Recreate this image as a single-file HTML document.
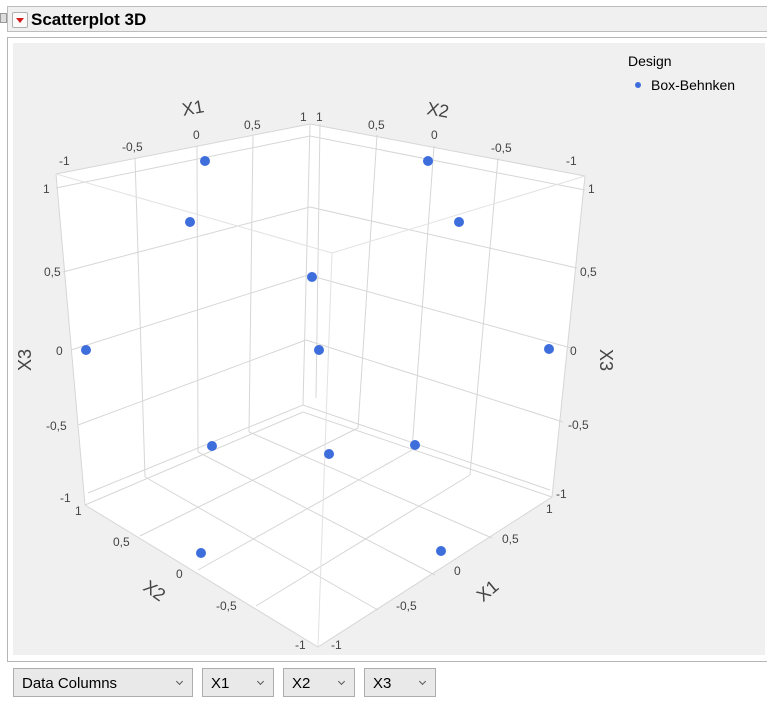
<!DOCTYPE html>
<html><head><meta charset="utf-8"><style>
body{margin:0;width:767px;height:701px;background:#fff;position:relative;overflow:hidden;font-family:"Liberation Sans",sans-serif}
.hdr{position:absolute;left:7px;top:6px;width:770px;height:24px;background:#f0f0f0;border:1px solid #bdbdbd}
.hdr .t{position:absolute;left:23px;top:3px;font-weight:bold;font-size:17px;color:#000}
.btn{position:absolute;left:4px;top:5px;width:14px;height:14px;border:1px solid #b0b0b0;border-radius:2px;background:#fafafa}
.btn:after{content:"";position:absolute;left:3px;top:5px;border-left:4px solid transparent;border-right:4px solid transparent;border-top:5px solid #d21a1a}
.box{position:absolute;left:7px;top:37px;width:770px;height:623px;border:1px solid #b5b5b5;background:#fff}
.plot{position:absolute;left:13px;top:43px;width:752px;height:612px;background:#f0f0f0}
.dd{position:absolute;top:668px;height:29px;border:1px solid #adadad;background:#e9e9e9;font-size:15px;line-height:29px;box-sizing:border-box;padding-left:8px;color:#000}
.dd:after{content:"";position:absolute;right:10px;top:10px;width:4px;height:4px;border-right:1px solid #555;border-bottom:1px solid #555;transform:rotate(45deg)}
svg text{font-family:"Liberation Sans",sans-serif;fill:#444;font-size:12px}
</style></head><body>
<div class="hdr"><div class="btn"></div><div class="t">Scatterplot 3D</div></div>
<div style="position:absolute;left:0;top:13px;width:5px;height:8px;border:1px solid #999;background:#ddd"></div>
<div class="box"></div>
<div class="plot"></div>
<svg width="767" height="701" style="position:absolute;left:0;top:0">
<polygon points="56,174 310,124 585,176 552,497 318,647 85,505" fill="#fff"/>
<g stroke="#d6d6d6" stroke-width="1" fill="none">
<polyline points="56,174 310,124 585,176"/>
<polyline points="56,188 310,136 585,190"/>
<line x1="56" y1="174" x2="85" y2="505"/>
<line x1="585" y1="176" x2="552" y2="497"/>
<line x1="310" y1="124" x2="303" y2="405"/>
<line x1="320" y1="124" x2="316" y2="398"/>
<polyline points="85,505 318,647 552,497"/>
<polyline points="88,493 303,405 550,490"/>
<polyline points="85,505 303,412 552,497"/>
<line x1="135" y1="158" x2="145" y2="477"/>
<line x1="197" y1="146" x2="198" y2="452"/>
<line x1="253" y1="136" x2="249" y2="432"/>
<line x1="377" y1="135" x2="358" y2="428"/>
<line x1="434" y1="146" x2="412" y2="450"/>
<line x1="498" y1="158" x2="470" y2="475"/>
<line x1="63" y1="272" x2="310" y2="207"/>
<line x1="71" y1="350" x2="308" y2="275"/>
<line x1="78" y1="425" x2="306" y2="340"/>
<line x1="577" y1="268" x2="310" y2="207"/>
<line x1="571" y1="348" x2="308" y2="275"/>
<line x1="563" y1="422" x2="306" y2="340"/>
<line x1="140" y1="536" x2="358" y2="428"/>
<line x1="198" y1="570" x2="412" y2="450"/>
<line x1="256" y1="606" x2="470" y2="475"/>
<line x1="378" y1="610" x2="145" y2="477"/>
<line x1="435" y1="575" x2="198" y2="452"/>
<line x1="492" y1="538" x2="249" y2="432"/>
</g>
<g stroke="#e2e2e2" fill="none">
<polyline points="56,174 332,253 585,176"/>
<line x1="332" y1="253" x2="318" y2="647"/>
</g>
<g fill="#3e6ddc">
<circle cx="205" cy="161" r="5"/><circle cx="190" cy="222" r="5"/><circle cx="312" cy="277" r="5"/>
<circle cx="319" cy="350" r="5"/><circle cx="86" cy="350" r="5"/><circle cx="212" cy="446" r="5"/>
<circle cx="329" cy="454" r="5"/><circle cx="415" cy="445" r="5"/><circle cx="201" cy="553" r="5"/>
<circle cx="441" cy="551" r="5"/><circle cx="549" cy="349" r="5"/><circle cx="459" cy="222" r="5"/>
<circle cx="428" cy="161" r="5"/><circle cx="638" cy="85" r="3"/>
</g>
<g>
<text x="43" y="193">1</text><text x="44" y="276">0,5</text><text x="56" y="355">0</text><text x="46" y="430">-0,5</text><text x="60" y="502">-1</text>
<text x="588" y="193">1</text><text x="580" y="276">0,5</text><text x="570" y="355">0</text><text x="568" y="429">-0,5</text><text x="556" y="498">-1</text>
<text x="59" y="165">-1</text><text x="122" y="151">-0,5</text><text x="193" y="139">0</text><text x="244" y="129">0,5</text><text x="300" y="121">1</text>
<text x="316" y="121">1</text><text x="368" y="129">0,5</text><text x="431" y="139">0</text><text x="491" y="152">-0,5</text><text x="566" y="165">-1</text>
<text x="75" y="515">1</text><text x="113" y="546">0,5</text><text x="176" y="578">0</text><text x="216" y="610">-0,5</text><text x="295" y="649">-1</text>
<text x="331" y="649">-1</text><text x="396" y="610">-0,5</text><text x="454" y="575">0</text><text x="502" y="543">0,5</text><text x="546" y="513">1</text>
</g>
<text x="193" y="114" transform="rotate(-10 193 108)" style="font-size:18px;text-anchor:middle">X1</text>
<text x="438" y="116" transform="rotate(10 438 110)" style="font-size:18px;text-anchor:middle">X2</text>
<text x="25" y="366" transform="rotate(-90 25 360)" style="font-size:18px;text-anchor:middle">X3</text>
<text x="606" y="366" transform="rotate(90 606 360)" style="font-size:18px;text-anchor:middle">X3</text>
<text x="155" y="597" transform="rotate(35 155 590)" style="font-size:18px;text-anchor:middle">X2</text>
<text x="487" y="597" transform="rotate(-40 487 590)" style="font-size:18px;text-anchor:middle">X1</text>
<text x="628" y="66" style="font-size:14px;fill:#000">Design</text>
<text x="651" y="90" style="font-size:14px;fill:#000">Box-Behnken</text>
</svg>
<div class="dd" style="left:13px;width:180px">Data Columns</div>
<div class="dd" style="left:202px;width:72px">X1</div>
<div class="dd" style="left:283px;width:72px">X2</div>
<div class="dd" style="left:364px;width:72px">X3</div>
</body></html>
